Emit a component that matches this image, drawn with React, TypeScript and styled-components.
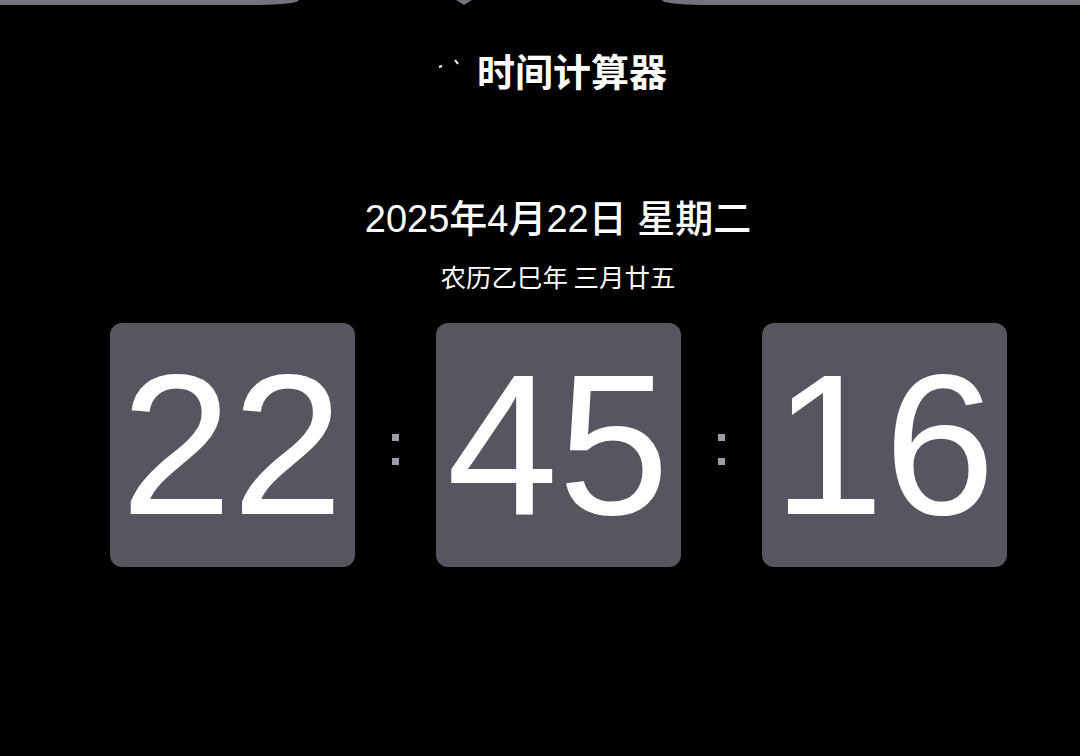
import React from "react";
import styled, { createGlobalStyle } from "styled-components";

const GlobalStyle = createGlobalStyle`
  html, body {
    margin: 0;
    padding: 0;
    background: #000;
  }
  body {
    font-family: "Liberation Sans", "Noto Sans CJK SC", sans-serif;
    color: #fff;
  }
`;

const Page = styled.div`
  width: 1080px;
  height: 756px;
  background: #000;
  overflow: hidden;
  display: flex;
  flex-direction: column;
`;

const TopStrip = styled.div`
  display: flex;
  align-items: flex-start;
  height: 6px;
`;

const StripPiece = styled.div<{ $side: "left" | "right"; $width: number }>`
  width: ${(p) => p.$width}px;
  height: 5px;
  background: #72737d;
  border-bottom-${(p) => (p.$side === "left" ? "right" : "left")}-radius: 40px 5px;
`;

const StripGap = styled.div`
  flex: 1;
  display: flex;
  justify-content: center;
  padding-right: 34px;
`;

const Notch = styled.div`
  width: 0;
  height: 0;
  border-left: 8px solid transparent;
  border-right: 8px solid transparent;
  border-top: 5px solid #72737d;
`;

const Content = styled.div`
  display: flex;
  flex-direction: column;
  align-items: center;
  padding-left: 36px;
`;

const TitleRow = styled.div`
  display: flex;
  align-items: center;
  gap: 14px;
  margin-top: 41px;
  padding-right: 12px;
`;

const TitleIcon = styled.svg`
  width: 26px;
  height: 26px;
  flex-shrink: 0;
`;

const Title = styled.h1`
  margin: 0;
  font-family: "Noto Sans CJK SC", sans-serif;
  font-size: 38px;
  font-weight: 700;
  line-height: 46px;
  letter-spacing: 0;
`;

const DateLine = styled.div`
  margin-top: 104px;
  font-family: "Liberation Sans", "Noto Sans CJK SC", sans-serif;
  font-size: 38px;
  font-weight: 500;
  line-height: 44px;
`;

const LunarLine = styled.div`
  margin-top: 19px;
  font-family: "Noto Sans CJK SC", sans-serif;
  font-size: 25.5px;
  line-height: 32px;
`;

const Clock = styled.div`
  display: flex;
  align-items: center;
  gap: 37px;
  margin-top: 31px;
`;

const Card = styled.div`
  width: 245px;
  height: 244px;
  border-radius: 12px;
  background: #55565f;
  display: flex;
  align-items: center;
  justify-content: center;
  font-family: "Liberation Sans", sans-serif;
  font-size: 200px;
  line-height: 1;
  color: #fff;
`;

const Colon = styled.div`
  display: flex;
  flex-direction: column;
  gap: 17px;
  margin-top: 9px;
`;

const Dot = styled.span`
  width: 7px;
  height: 7px;
  background: #9a9ca8;
`;

const Separator = () => (
  <Colon>
    <Dot />
    <Dot />
  </Colon>
);

export default function App() {
  const parts = ["22", "45", "16"];
  return (
    <>
      <GlobalStyle />
      <Page>
        <TopStrip>
          <StripPiece $side="left" $width={299} />
          <StripGap>
            <Notch />
          </StripGap>
          <StripPiece $side="right" $width={418} />
        </TopStrip>
        <Content>
          <TitleRow>
            <TitleIcon viewBox="0 0 26 26">
              <path d="M2 10 L5 9" stroke="#fff" strokeWidth="2" />
              <path d="M18 3 L21 7" stroke="#fff" strokeWidth="2" />
            </TitleIcon>
            <Title>时间计算器</Title>
          </TitleRow>
          <DateLine>2025年4月22日 星期二</DateLine>
          <LunarLine>农历乙巳年 三月廿五</LunarLine>
          <Clock>
            {parts.map((p, i) => (
              <React.Fragment key={p}>
                {i > 0 && <Separator />}
                <Card>{p}</Card>
              </React.Fragment>
            ))}
          </Clock>
        </Content>
      </Page>
    </>
  );
}
